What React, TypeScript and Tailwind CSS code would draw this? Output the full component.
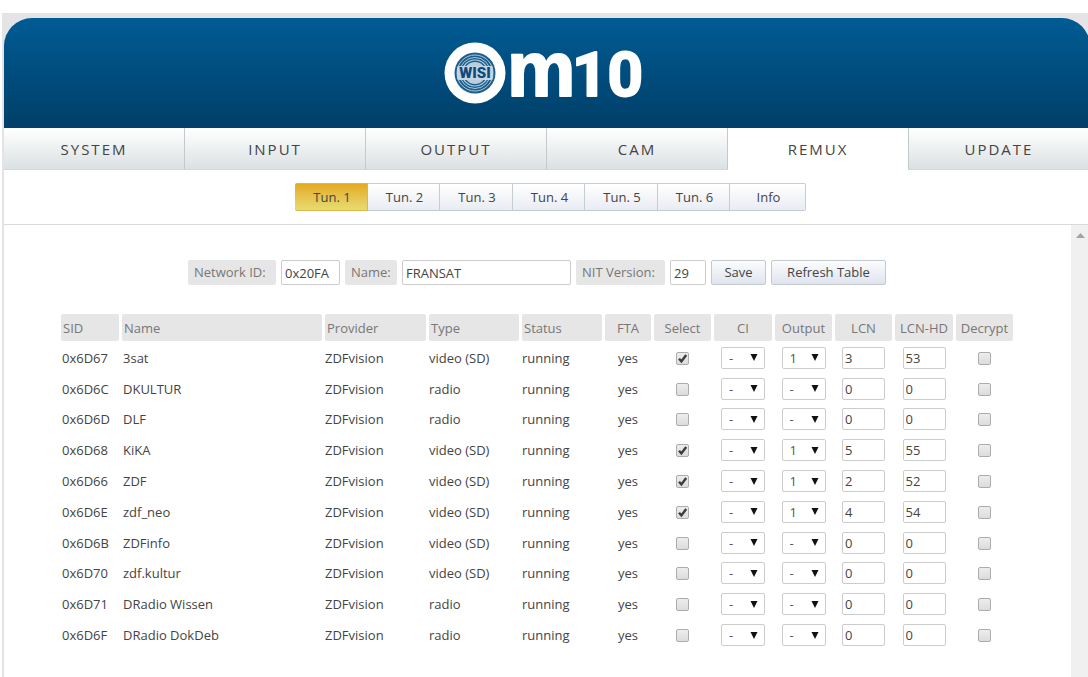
import React from 'react';

const menu = ['SYSTEM', 'INPUT', 'OUTPUT', 'CAM', 'REMUX', 'UPDATE'];
const tuners = ['Tun. 1', 'Tun. 2', 'Tun. 3', 'Tun. 4', 'Tun. 5', 'Tun. 6', 'Info'];

const columns = [
  { title: 'SID', width: 'w-[58px]', align: 'text-left' },
  { title: 'Name', width: 'w-[200px]', align: 'text-left' },
  { title: 'Provider', width: 'w-[101px]', align: 'text-left' },
  { title: 'Type', width: 'w-[90px]', align: 'text-left' },
  { title: 'Status', width: 'w-[80px]', align: 'text-left' },
  { title: 'FTA', width: 'w-[46px]', align: 'text-center' },
  { title: 'Select', width: 'w-[57px]', align: 'text-center' },
  { title: 'CI', width: 'w-[58px]', align: 'text-center' },
  { title: 'Output', width: 'w-[57px]', align: 'text-center' },
  { title: 'LCN', width: 'w-[57px]', align: 'text-center' },
  { title: 'LCN-HD', width: 'w-[58px]', align: 'text-center' },
  { title: 'Decrypt', width: 'w-[57px]', align: 'text-center' }
];

const services = [
  { sid: '0x6D67', name: '3sat', type: 'video (SD)', selected: true, output: '1', lcn: '3', lcnHd: '53' },
  { sid: '0x6D6C', name: 'DKULTUR', type: 'radio', selected: false, output: '-', lcn: '0', lcnHd: '0' },
  { sid: '0x6D6D', name: 'DLF', type: 'radio', selected: false, output: '-', lcn: '0', lcnHd: '0' },
  { sid: '0x6D68', name: 'KiKA', type: 'video (SD)', selected: true, output: '1', lcn: '5', lcnHd: '55' },
  { sid: '0x6D66', name: 'ZDF', type: 'video (SD)', selected: true, output: '1', lcn: '2', lcnHd: '52' },
  { sid: '0x6D6E', name: 'zdf_neo', type: 'video (SD)', selected: true, output: '1', lcn: '4', lcnHd: '54' },
  { sid: '0x6D6B', name: 'ZDFinfo', type: 'video (SD)', selected: false, output: '-', lcn: '0', lcnHd: '0' },
  { sid: '0x6D70', name: 'zdf.kultur', type: 'video (SD)', selected: false, output: '-', lcn: '0', lcnHd: '0' },
  { sid: '0x6D71', name: 'DRadio Wissen', type: 'radio', selected: false, output: '-', lcn: '0', lcnHd: '0' },
  { sid: '0x6D6F', name: 'DRadio DokDeb', type: 'radio', selected: false, output: '-', lcn: '0', lcnHd: '0' }
];

const Logo = () => (
  <svg width="208" height="110" viewBox="0 -23 208 110" role="img" aria-label="WISI OM10">
    <circle cx="32" cy="32" r="30.5" fill="#fff" />
    <circle cx="32" cy="32" r="20.5" fill="#1c5f8c" />
    <circle cx="32" cy="32" r="18" fill="none" stroke="#a9c6db" strokeWidth="1" />
    <circle cx="32" cy="32" r="15.5" fill="none" stroke="#a9c6db" strokeWidth="1" />
    <circle cx="32" cy="32" r="13" fill="none" stroke="#b9d0e0" strokeWidth="1.2" />
    <circle cx="32" cy="32" r="11" fill="#b9cfe0" />
    <rect x="14" y="25" width="36" height="14" rx="2" fill="#c3d5e4" />
    <text x="32" y="37" textAnchor="middle" fontFamily="Roboto, sans-serif" fontSize="15" fontWeight="900" fill="#0f4a78">WISI</text>
    <g fill="#fff" stroke="#fff" strokeLinejoin="round" fontWeight="700" strokeWidth="2">
      <text x="64" y="55" fontFamily="'Liberation Sans Narrow', sans-serif" fontSize="77">m</text>
      <text x="129" y="55" fontFamily="Roboto, sans-serif" fontSize="62">10</text>
    </g>
  </svg>
);

const CheckBox = ({ label, checked = false }: { label: string; checked?: boolean }) => (
  <span className="grid place-items-center">
    <input
      type="checkbox"
      aria-label={label}
      defaultChecked={checked}
      className="peer col-start-1 row-start-1 size-[13px] appearance-none rounded-[2px] border border-[#acacac] bg-linear-to-b from-[#ededed] to-[#dcdcdc]"
    />
    <svg
      className="pointer-events-none col-start-1 row-start-1 hidden peer-checked:block"
      width="13"
      height="13"
      viewBox="0 0 13 13"
    >
      <path d="M3 6.8l2.4 2.6L10.2 3" fill="none" stroke="#3c3c3c" strokeWidth="2.4" />
    </svg>
  </span>
);

const DropDown = ({ label, value }: { label: string; value: string }) => (
  <span className="mx-auto grid w-11 items-center">
    <select
      aria-label={label}
      defaultValue={value}
      className="col-start-1 row-start-1 h-[22px] w-full appearance-none rounded-[2px] border border-[#ccc] bg-white pl-[7px] leading-5 text-[#555]"
    >
      <option>-</option>
      <option>1</option>
    </select>
    <svg
      className="pointer-events-none col-start-1 row-start-1 mr-[7px] justify-self-end"
      width="8"
      height="7"
      viewBox="0 0 8 7"
    >
      <path d="M0.5 0h7L4 7z" fill="#111" />
    </svg>
  </span>
);

const NumberBox = ({ label, value }: { label: string; value: string }) => (
  <input
    type="text"
    aria-label={label}
    defaultValue={value}
    className="mx-auto block h-[22px] w-[43px] rounded-[2px] border border-[#ccc] bg-white px-0.5 text-[#444]"
  />
);

const fieldLabel = 'flex h-[25px] items-center rounded-[2px] bg-[#e6e6e6] px-1.5 text-[#777] whitespace-nowrap';
const fieldInput = 'h-[25px] rounded-[2px] border border-[#ccc] bg-white px-[3px] text-[#444]';
const formButton = 'h-[25px] rounded-[2px] border border-[#c3c9cf] bg-linear-to-b from-[#fbfcfd] to-[#dfe4ee] text-[#444] whitespace-nowrap';

const App = () => {
  return (
    <div className="flex min-h-screen flex-col overflow-x-hidden bg-white pt-[13px] pl-[2px] font-['Open_Sans',sans-serif] text-[13px] text-[#444]">
      <div className="-mr-0.5 flex grow flex-col bg-[#e4e4e6] pt-[5px] pl-[2px]">
        <header className="flex h-[110px] items-center justify-center rounded-t-[28px] bg-linear-to-b from-[#005c94] to-[#003f69]">
          <Logo />
        </header>

        <nav className="flex bg-white">
          {menu.map((item) => (
            <a
              key={item}
              href="#"
              className={`flex h-[42px] flex-1 items-center justify-center border-b pt-0.5 text-[15px] tracking-[2px] text-[#444] ${
                item === 'REMUX'
                  ? 'border-b-white bg-white'
                  : 'border-r border-r-[#c4c9cb] border-b-[#d3d8da] bg-linear-to-b from-white to-[#dbe1e3]'
              } ${item === 'UPDATE' ? 'border-l border-l-[#c4c9cb]' : ''}`}
            >
              {item}
            </a>
          ))}
        </nav>

        <div className="flex justify-center border-b border-[#d8dadc] bg-white py-[13px] pl-1.5">
          {tuners.map((item, i) => (
            <button
              key={item}
              className={`h-7 border-y border-r pt-px pl-[3px] text-[#444] ${
                i === 0
                  ? 'rounded-l-[2px] border-[#dcb84a] bg-linear-to-b from-[#e3ab1c] to-[#e6dc70]'
                  : 'border-[#c5cdd4] bg-linear-to-b from-white to-[#e9ecf4]'
              } ${item === 'Info' ? 'w-[76px] rounded-r-[2px]' : i % 2 === 0 ? 'w-[73px]' : 'w-[72px]'}`}
            >
              {item}
            </button>
          ))}
        </div>

        <div className="flex grow bg-white">
          <main className="flex grow flex-col items-center pt-[35px] pr-px">
            <form className="flex gap-[5px]" onSubmit={(e) => e.preventDefault()}>
              <label htmlFor="network-id" className={`${fieldLabel} w-[88px]`}>Network ID:</label>
              <input id="network-id" type="text" defaultValue="0x20FA" className={`${fieldInput} w-[59px]`} />
              <label htmlFor="network-name" className={`${fieldLabel} w-[52px]`}>Name:</label>
              <input id="network-name" type="text" defaultValue="FRANSAT" className={`${fieldInput} w-[169px]`} />
              <label htmlFor="nit-version" className={`${fieldLabel} w-[89px]`}>NIT Version:</label>
              <input id="nit-version" type="text" defaultValue="29" className={`${fieldInput} w-[36px]`} />
              <button type="submit" className={`${formButton} w-[55px]`}>Save</button>
              <button type="button" className={`${formButton} w-[115px]`}>Refresh Table</button>
            </form>

            <table className="mt-[26px] h-[341px] table-fixed border-separate border-spacing-[3px] leading-5">
              <thead>
                <tr className="h-[27px]">
                  {columns.map((column) => (
                    <th
                      key={column.title}
                      className={`${column.width} ${column.align} rounded-[2px] bg-[#e6e6e6] px-0.5 py-0 font-normal whitespace-nowrap text-[#777]`}
                    >
                      {column.title}
                    </th>
                  ))}
                </tr>
              </thead>
              <tbody>
                {services.map((service) => (
                  <tr key={service.sid}>
                    <td className="px-px py-0 whitespace-nowrap">{service.sid}</td>
                    <td className="px-px py-0">{service.name}</td>
                    <td className="p-0">ZDFvision</td>
                    <td className="p-0">{service.type}</td>
                    <td className="p-0">running</td>
                    <td className="p-0 text-center">yes</td>
                    <td className="p-0 pt-px">
                      <CheckBox label={`Select ${service.name}`} checked={service.selected} />
                    </td>
                    <td className="p-0">
                      <DropDown label={`CI ${service.name}`} value="-" />
                    </td>
                    <td className="p-0">
                      <DropDown label={`Output ${service.name}`} value={service.output} />
                    </td>
                    <td className="p-0">
                      <NumberBox label={`LCN ${service.name}`} value={service.lcn} />
                    </td>
                    <td className="p-0">
                      <NumberBox label={`LCN-HD ${service.name}`} value={service.lcnHd} />
                    </td>
                    <td className="p-0 pt-px">
                      <CheckBox label={`Decrypt ${service.name}`} />
                    </td>
                  </tr>
                ))}
              </tbody>
            </table>
          </main>

          {/* scroll bar track */}
          <div className="flex w-[19px] shrink-0 justify-center bg-[#f0f0f0] pt-2">
            <svg width="9" height="5" viewBox="0 0 9 5">
              <path d="M0 5L4.5 0L9 5z" fill="#a3a3a3" />
            </svg>
          </div>
        </div>
      </div>
    </div>
  );
};

export default App;
